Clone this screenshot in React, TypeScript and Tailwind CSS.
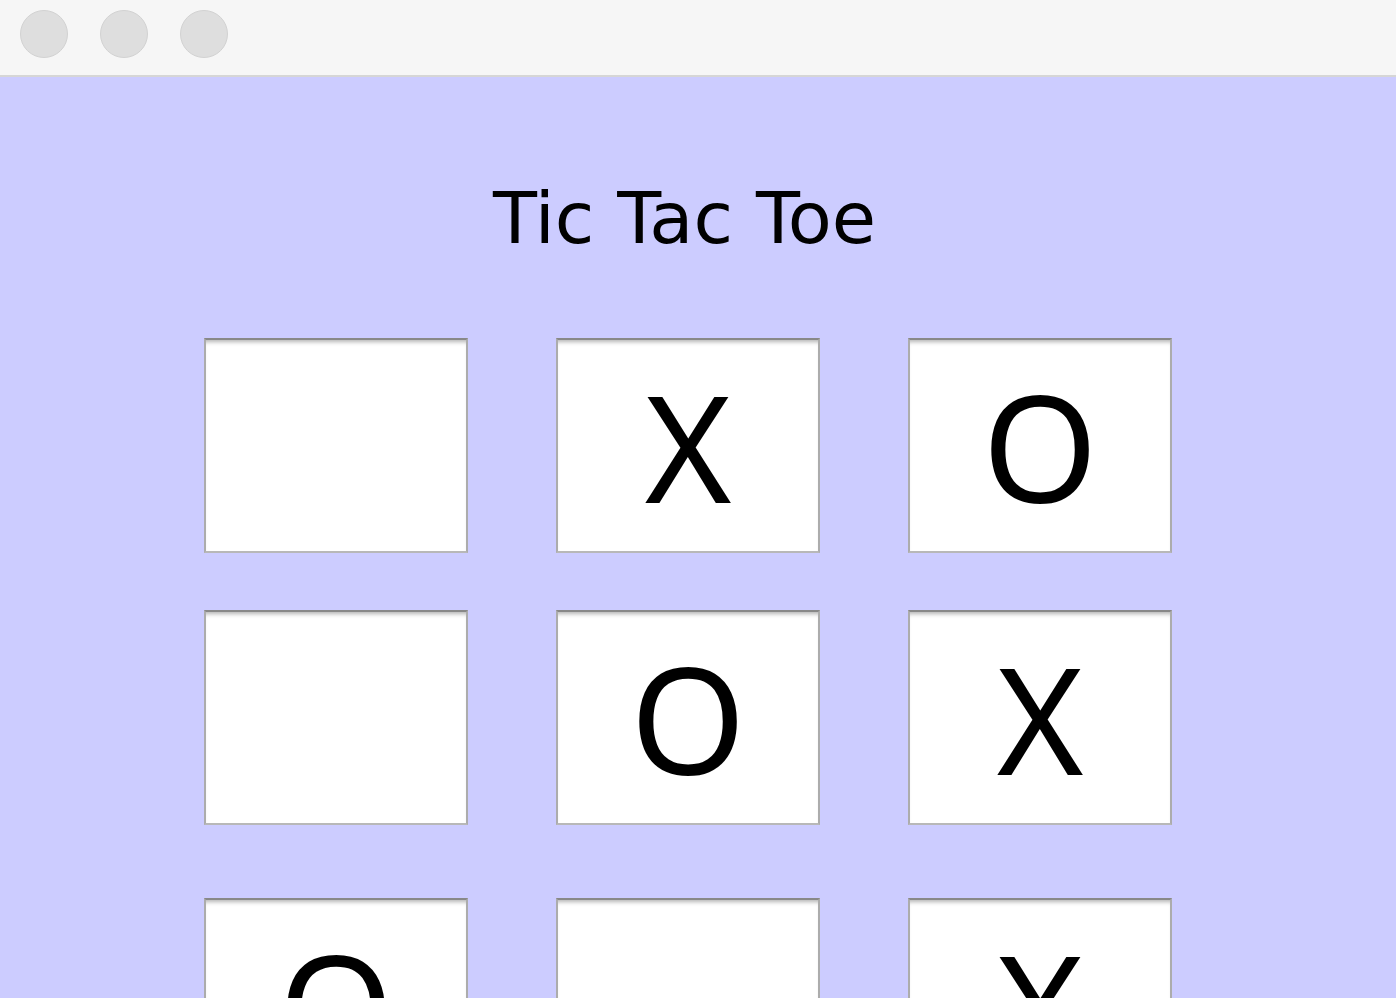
const board: string[][] = [
  ["", "X", "O"],
  ["", "O", "X"],
  ["O", "", "X"],
];

function Cell({ mark }: { mark: string }) {
  return (
    <div className="w-[264px] h-[215px] bg-white border-2 border-[#acacac] border-t-[#888888] border-b-[#b8b8b8] shadow-[inset_0_5px_4px_-3px_rgba(0,0,0,0.3)] flex items-center justify-center">
      <span className="text-[148px] leading-none text-black font-['Noto_Sans',sans-serif]">
        {mark}
      </span>
    </div>
  );
}

export default function App() {
  return (
    <div className="w-[1396px] h-[998px] overflow-hidden bg-[#ccccff] flex flex-col">
      {/* window title bar */}
      <div className="h-[77px] shrink-0 bg-[#f6f6f6] border-b-2 border-[#d6d6d6] flex items-center gap-8 pl-5 pb-[8px]">
        <span className="w-12 h-12 rounded-full bg-[#dedede] border border-[#d2d2d2]" />
        <span className="w-12 h-12 rounded-full bg-[#dedede] border border-[#d2d2d2]" />
        <span className="w-12 h-12 rounded-full bg-[#dedede] border border-[#d2d2d2]" />
      </div>

      <div className="ml-[204px] w-[968px]">
        <h1 className="mt-[105px] pr-[7px] text-center text-[72px] leading-none text-black font-['DejaVu_Sans',sans-serif]">
          Tic Tac Toe
        </h1>

        <div className="mt-[84px] flex flex-col">
          {board.map((row, r) => (
            <div
              key={r}
              className={
                r === 0 ? "flex gap-[88px]" : r === 1 ? "flex gap-[88px] mt-[57px]" : "flex gap-[88px] mt-[73px]"
              }
            >
              {row.map((mark, c) => (
                <Cell key={c} mark={mark} />
              ))}
            </div>
          ))}
        </div>
      </div>
    </div>
  );
}
